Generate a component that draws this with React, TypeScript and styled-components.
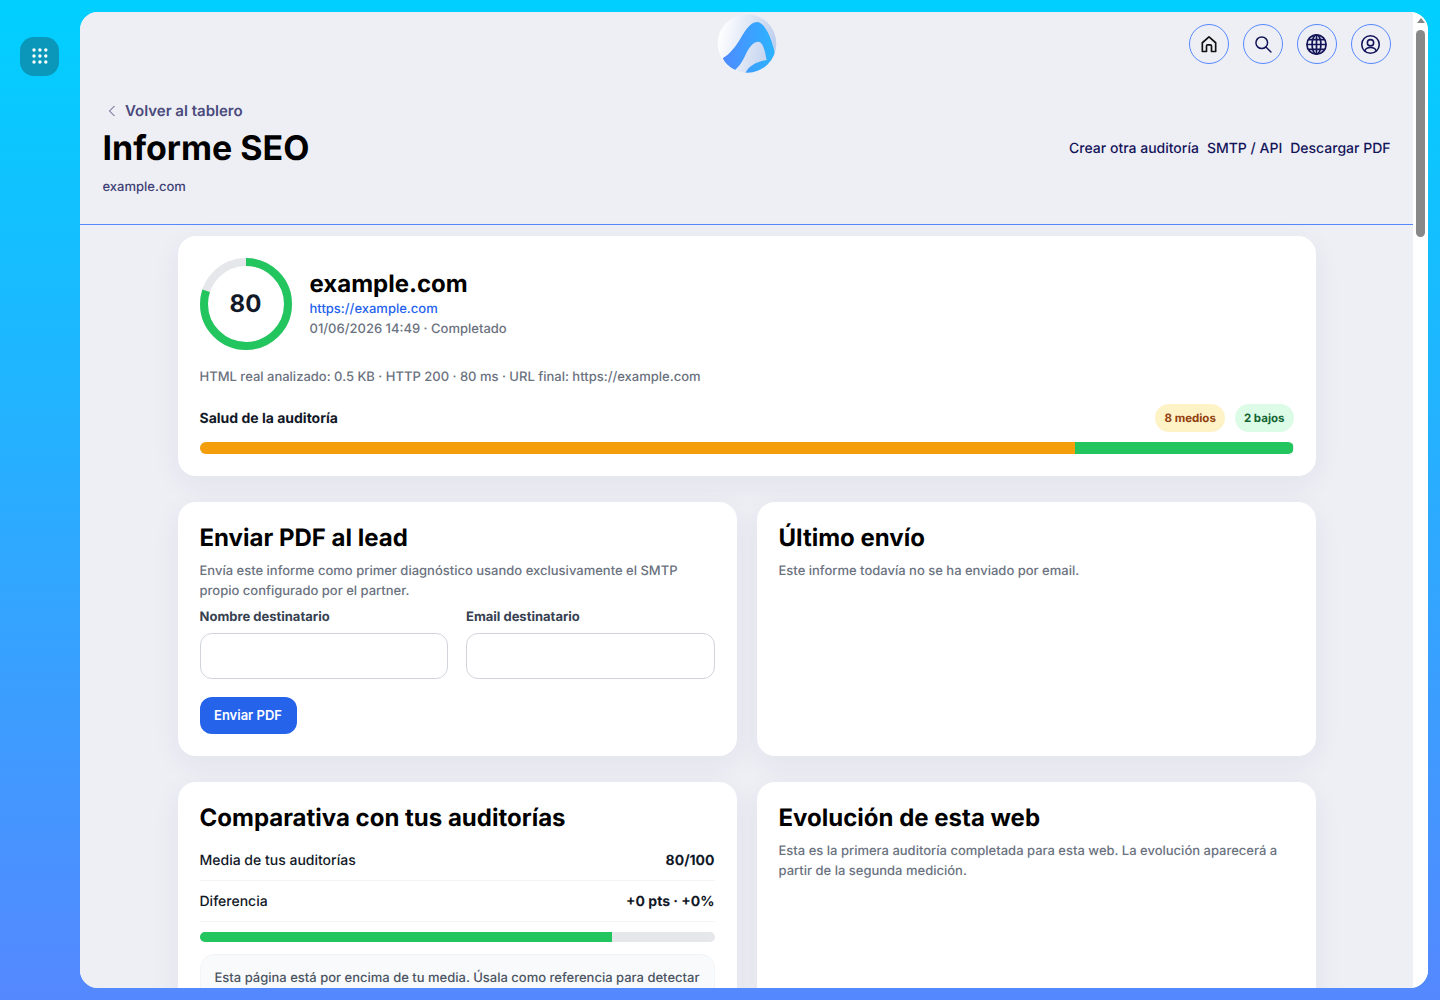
import React from "react";
import styled, { createGlobalStyle } from "styled-components";

const Global = createGlobalStyle`
  html, body { margin: 0; padding: 0; height: 100%; overflow: hidden; }
  body {
    font-family: Inter, "Liberation Sans", sans-serif;
    background: linear-gradient(180deg, #00d0ff 0%, #5588ff 100%);
    color: #111827;
    text-rendering: geometricPrecision;
  }
  * { box-sizing: border-box; }
`;

const Shell = styled.div`
  display: flex;
  height: 1000px;
  padding: 12px 12px 12px 0;
`;
const Rail = styled.aside`
  width: 80px;
  flex: none;
  padding: 25px 0 0 20px;
`;
const AppsButton = styled.button`
  width: 39px;
  height: 39px;
  border: 0;
  padding: 0;
  border-radius: 14px;
  background: #0a97b9;
  display: flex;
  align-items: center;
  justify-content: center;
`;
const Panel = styled.main`
  flex: 1;
  min-width: 0;
  display: flex;
  background: #eeeff5;
  border-radius: 18px;
  overflow: hidden;
`;
const Scroller = styled.div`
  flex: 1;
  min-width: 0;
  height: 100%;
  overflow-y: hidden;
  background: #eeeff5;
`;
const ScrollRail = styled.div`
  width: 15px;
  flex: none;
  background: #fff;
  display: flex;
  flex-direction: column;
  align-items: center;
`;
const ScrollArrow = styled.span`
  margin-top: 6px;
  width: 0;
  height: 0;
  border-left: 4.5px solid transparent;
  border-right: 4.5px solid transparent;
  border-bottom: 5px solid #888;
`;
const ScrollThumb = styled.span`
  margin-top: 7px;
  width: 9px;
  height: 207px;
  border-radius: 4.5px;
  background: #888;
`;
const Header = styled.header`
  height: 213px;
  border-bottom: 1px solid #5588ff;
  padding: 12px 22.5px 0;
  display: flex;
  flex-direction: column;
`;
const TopBar = styled.div`
  position: relative;
  height: 40px;
  display: flex;
  justify-content: flex-end;
  gap: 14px;
`;
const Logo = styled.svg`
  position: absolute;
  left: 50%;
  top: -10px;
  margin-left: -30px;
  width: 60px;
  height: 60px;
`;
const RoundButton = styled.button`
  width: 40px;
  height: 40px;
  padding: 0;
  border-radius: 50%;
  border: 1px solid #5588ff;
  background: transparent;
  display: flex;
  align-items: center;
  justify-content: center;
  color: ${(p: { $dark?: boolean }) => (p.$dark ? "#111111" : "#14145a")};
`;
const BackLink = styled.a`
  display: flex;
  align-items: center;
  gap: 7.5px;
  margin: 38px 0 0 0;
  padding-left: 3px;
  height: 18px;
  font-size: 15px;
  font-weight: 600;
  line-height: 18px;
  color: #4a4a7c;
`;
const TitleRow = styled.div`
  display: flex;
  align-items: center;
  justify-content: space-between;
  margin-top: 8px;
`;
const Title = styled.h1`
  margin: 0;
  font-size: 34px;
  line-height: 42px;
  font-weight: 700;
  color: #000;
`;
const Actions = styled.nav`
  display: flex;
  gap: 8px;
`;
const ActionLink = styled.a`
  font-size: 14px;
  line-height: 20px;
  font-weight: 500;
  color: #14145a;
`;
const Domain = styled.div`
  margin-top: 7px;
  font-size: 13px;
  line-height: 20px;
  font-weight: 500;
  color: #3f3f75;
`;
const Content = styled.div`
  width: 1138px;
  margin: 11px 0 0 97.5px;
  display: flex;
  flex-direction: column;
  gap: 26px;
`;
const Card = styled.section`
  background: #fff;
  border-radius: 18px;
  padding: 22px;
  box-shadow: 0 8px 30px rgba(31, 41, 85, 0.06);
`;
const TwoCols = styled.div`
  display: grid;
  grid-template-columns: 1fr 1fr;
  gap: 20px;
`;
const Summary = styled.div`
  display: flex;
  align-items: center;
  gap: 18px;
`;
const Gauge = styled.div`
  position: relative;
  width: 92px;
  height: 92px;
  flex: none;
`;
const GaugeValue = styled.span`
  position: absolute;
  inset: 0;
  padding-bottom: 2px;
  display: flex;
  align-items: center;
  justify-content: center;
  font-size: 24px;
  font-weight: 700;
  color: #111827;
`;
const SiteName = styled.div`
  font-size: 24px;
  line-height: 30px;
  font-weight: 700;
  color: #000;
`;
const SiteUrl = styled.a`
  display: block;
  font-size: 13px;
  line-height: 20px;
  font-weight: 500;
  color: #2563eb;
`;
const Meta = styled.div`
  font-size: 13px;
  line-height: 20px;
  font-weight: 500;
  color: #6b7280;
`;
const InfoLine = styled(Meta)`
  margin-top: 17px;
`;
const HealthRow = styled.div`
  display: flex;
  align-items: center;
  gap: 10px;
  margin-top: 17px;
`;
const HealthLabel = styled.div`
  flex: 1;
  font-size: 14px;
  font-weight: 650;
  color: #111827;
`;
const Pill = styled.span<{ $bg: string; $fg: string }>`
  height: 28px;
  padding: 0 9px;
  border-radius: 14px;
  display: flex;
  align-items: center;
  font-size: 11.5px;
  font-weight: 700;
  background: ${(p) => p.$bg};
  color: ${(p) => p.$fg};
`;
const Track = styled.div<{ $h: number }>`
  display: flex;
  height: ${(p) => p.$h}px;
  border-radius: ${(p) => p.$h / 2}px;
  background: #e5e7eb;
  overflow: hidden;
`;
const Fill = styled.div<{ $color: string }>`
  background: ${(p) => p.$color};
`;
const HealthTrack = styled(Track)`
  margin-top: 10px;
`;
const H2 = styled.h2`
  margin: 0;
  font-size: 24px;
  line-height: 28px;
  font-weight: 700;
  color: #000;
`;
const Muted = styled.p`
  margin: 9px 0 0;
  font-size: 13px;
  line-height: 20px;
  font-weight: 500;
  color: #6b7280;
`;
const FormGrid = styled.div`
  display: grid;
  grid-template-columns: 1fr 1fr;
  gap: 18px;
  margin-top: 6px;
`;
const Field = styled.label`
  display: block;
  font-size: 13px;
  line-height: 20px;
  font-weight: 650;
  color: #374151;
`;
const Input = styled.input`
  display: block;
  width: 100%;
  height: 46px;
  margin-top: 6px;
  border: 1px solid #d1d5db;
  border-radius: 12px;
  background: #fff;
`;
const Submit = styled.button`
  display: block;
  margin-top: 18px;
  height: 37px;
  width: 97px;
  padding: 0 0 2px;
  border: 0;
  border-radius: 12px;
  background: #2563eb;
  color: #fff;
  font-family: inherit;
  font-size: 13px;
  font-weight: 600;
`;
const Row = styled.div`
  display: flex;
  justify-content: space-between;
  align-items: center;
  height: 41px;
  border-bottom: 1px solid #f3f4f6;
  font-size: 14px;
  font-weight: 500;
  color: #111827;
`;
const Rows = styled.div`
  margin-top: 8px;
`;
const RowValue = styled.strong`
  font-weight: 700;
`;
const CompareTrack = styled(Track)`
  margin-top: 10px;
`;
const Note = styled.div`
  margin-top: 12px;
  padding: 13px 14px;
  border: 1px solid #f3f4f6;
  border-radius: 14px;
  background: #f9fafb;
  font-size: 13px;
  line-height: 20px;
  font-weight: 500;
  color: #4b5563;
`;

const HomeIcon = () => (
  <svg width="20" height="20" viewBox="0 0 24 24" fill="none" stroke="currentColor" strokeWidth="2" strokeLinecap="round" strokeLinejoin="round">
    <path d="M4 10.5 12 3.5l8 7V21h-5v-6.500a1.500 1.500 0 0 0-1.500-1.500h-3A1.500 1.500 0 0 0 9 14.500V21H4z" />
  </svg>
);
const SearchIcon = () => (
  <svg width="20" height="20" viewBox="0 0 24 24" fill="none" stroke="currentColor" strokeWidth="1.8" strokeLinecap="round">
    <circle cx="10.5" cy="10.5" r="7" />
    <path d="m15.8 15.8 5.7 5.7" />
  </svg>
);
const GlobeIcon = () => (
  <svg width="23" height="23" viewBox="0 0 24 24" fill="none" stroke="currentColor" strokeWidth="1.8">
    <circle cx="12" cy="12" r="10" />
    <ellipse cx="12" cy="12" rx="4.6" ry="10" />
    <path d="M12 2v20M2 12h20M3.6 7h16.8M3.6 17h16.8" />
  </svg>
);
const UserIcon = () => (
  <svg width="21" height="21" viewBox="0 0 24 24" fill="none" stroke="currentColor" strokeWidth="1.8" strokeLinecap="round">
    <circle cx="12" cy="12" r="10" />
    <circle cx="12" cy="10" r="3.6" />
    <path d="M5.5 19.4c.8-2.6 3.4-3.9 6.5-3.9s5.700 1.300 6.500 3.900" />
  </svg>
);
const dots = [0, 1, 2].flatMap((y) => [0, 1, 2].map((x) => [14 + x * 5.9, 13 + y * 6] as const));

export default function App() {
  return (
    <>
      <Global />
      <Shell>
        <Rail>
          <AppsButton aria-label="Aplicaciones">
            <svg width="39" height="39" viewBox="0 0 39 39" style={{ flex: "none" }}>
              {dots.map(([x, y]) => (
                <circle key={`${x}-${y}`} cx={x} cy={y} r="1.7" fill="#fff" />
              ))}
            </svg>
          </AppsButton>
        </Rail>
        <Panel>
          <Scroller>
            <Header>
              <TopBar>
                <Logo viewBox="0 0 60 60">
                  <defs>
                    <linearGradient id="disc" x1="0" y1="0.4" x2="1" y2="0.6">
                      <stop offset="0" stopColor="#ffffff" />
                      <stop offset="1" stopColor="#bccdec" />
                    </linearGradient>
                    <linearGradient id="mark" x1="0" y1="0.5" x2="1" y2="0.5">
                      <stop offset="0" stopColor="#4f8aff" />
                      <stop offset="1" stopColor="#2bb4ff" />
                    </linearGradient>
                    <clipPath id="round">
                      <circle cx="30" cy="29.500" r="29.300" />
                    </clipPath>
                  </defs>
                  <circle cx="30" cy="29.500" r="29.300" fill="url(#disc)" />
                  <path
                    clipPath="url(#round)"
                    fill="url(#mark)"
                    d="M5.700 44.300C13 40 18 33 22 27C28 17 33 8 40 8C48 8 55 25 58 40C56 48 50 54 42 60L28 60C32 51 40 48 49.700 46C48 37 46 28 41.300 27.700C34 28 30 38 27 44C24 50 21 53 18 56C12 53 8 49 5.700 44.300Z"
                  />
                </Logo>
                <RoundButton $dark aria-label="Inicio"><HomeIcon /></RoundButton>
                <RoundButton aria-label="Buscar"><SearchIcon /></RoundButton>
                <RoundButton aria-label="Idioma"><GlobeIcon /></RoundButton>
                <RoundButton aria-label="Cuenta"><UserIcon /></RoundButton>
              </TopBar>
              <BackLink>
                <svg width="12" height="12" viewBox="0 0 12 12" fill="none" stroke="#4a4a7c" strokeWidth="1">
                  <path d="M8.500 1 3.500 6l5 5" />
                </svg>
                Volver al tablero
              </BackLink>
              <TitleRow>
                <Title>Informe SEO</Title>
                <Actions>
                  <ActionLink>Crear otra auditoría</ActionLink>
                  <ActionLink>SMTP / API</ActionLink>
                  <ActionLink>Descargar PDF</ActionLink>
                </Actions>
              </TitleRow>
              <Domain>example.com</Domain>
            </Header>
            <Content>
              <Card>
                <Summary>
                  <Gauge>
                    <svg width="92" height="92" viewBox="0 0 92 92">
                      <circle cx="46" cy="46" r="42" fill="none" stroke="#e5e7eb" strokeWidth="8" />
                      <circle
                        cx="46"
                        cy="46"
                        r="42"
                        fill="none"
                        stroke="#22c55e"
                        strokeWidth="8"
                        strokeDasharray={`${2 * Math.PI * 42 * 0.8} ${2 * Math.PI * 42}`}
                        transform="rotate(-90 46 46)"
                      />
                    </svg>
                    <GaugeValue>80</GaugeValue>
                  </Gauge>
                  <div>
                    <SiteName>example.com</SiteName>
                    <SiteUrl>https://example.com</SiteUrl>
                    <Meta>01/06/2026 14:49 · Completado</Meta>
                  </div>
                </Summary>
                <InfoLine>HTML real analizado: 0.5 KB · HTTP 200 · 80 ms · URL final: https://example.com</InfoLine>
                <HealthRow>
                  <HealthLabel>Salud de la auditoría</HealthLabel>
                  <Pill $bg="#fef3c7" $fg="#92400e">8 medios</Pill>
                  <Pill $bg="#dcfce7" $fg="#166534">2 bajos</Pill>
                </HealthRow>
                <HealthTrack $h={12}>
                  <Fill $color="#f59e0b" style={{ width: "80%" }} />
                  <Fill $color="#22c55e" style={{ width: "20%" }} />
                </HealthTrack>
              </Card>
              <TwoCols>
                <Card>
                  <H2>Enviar PDF al lead</H2>
                  <Muted>Envía este informe como primer diagnóstico usando exclusivamente el SMTP propio configurado por el partner.</Muted>
                  <FormGrid>
                    <Field>Nombre destinatario<Input /></Field>
                    <Field>Email destinatario<Input /></Field>
                  </FormGrid>
                  <Submit>Enviar PDF</Submit>
                </Card>
                <Card>
                  <H2>Último envío</H2>
                  <Muted>Este informe todavía no se ha enviado por email.</Muted>
                </Card>
              </TwoCols>
              <TwoCols>
                <Card>
                  <H2>Comparativa con tus auditorías</H2>
                  <Rows>
                    <Row>Media de tus auditorías<RowValue>80/100</RowValue></Row>
                    <Row>Diferencia<RowValue>+0 pts · +0%</RowValue></Row>
                  </Rows>
                  <CompareTrack $h={10}>
                    <Fill $color="#22c55e" style={{ width: "80%" }} />
                  </CompareTrack>
                  <Note>Esta página está por encima de tu media. Úsala como referencia para detectar qué ajustes aportan más valor.</Note>
                </Card>
                <Card>
                  <H2>Evolución de esta web</H2>
                  <Muted>Esta es la primera auditoría completada para esta web. La evolución aparecerá a partir de la segunda medición.</Muted>
                </Card>
              </TwoCols>
            </Content>
          </Scroller>
          <ScrollRail aria-hidden="true">
            <ScrollArrow />
            <ScrollThumb />
          </ScrollRail>
        </Panel>
      </Shell>
    </>
  );
}
